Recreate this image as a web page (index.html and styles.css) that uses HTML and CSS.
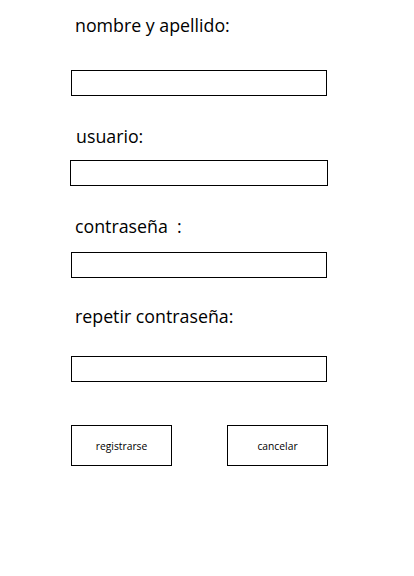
FILE: index.html
```html
<!DOCTYPE html>
<html><head><meta charset="utf-8"><link rel="stylesheet" href="styles.css"></head>
<body>
<form class="form">
  <label class="label l1">nombre y apellido:</label>
  <input class="box b1" type="text">
  <label class="label l2">usuario:</label>
  <input class="box b2 wide" type="text">
  <label class="label l3">contraseña&nbsp; :</label>
  <input class="box b3" type="password">
  <label class="label l4">repetir contraseña:</label>
  <input class="box b4" type="password">
  <div class="actions">
    <button type="button" class="btn">registrarse</button>
    <button type="button" class="btn">cancelar</button>
  </div>
</form>
</body></html>
```
FILE: styles.css
```css
html, body { margin: 0; background: #fff; }
.form {
  display: flex;
  flex-direction: column;
  align-items: flex-start;
  padding-left: 71px;
  width: 256px;
  font-family: "Open Sans", sans-serif;
  color: #000;
}
.label {
  display: block;
  font-size: 17.8px;
  line-height: 24px;
  margin-left: 4px;
  white-space: pre;
}
.l1 { margin-top: 13px; }
.l2 { margin-top: 28px; margin-left: 5px; }
.l3 { margin-top: 28px; }
.l4 { margin-top: 26px; }
.box {
  box-sizing: border-box;
  width: 256px;
  height: 26px;
  border: 1px solid #000;
  padding: 0;
  margin: 0;
  background: #fff;
  outline: none;
}
.b1 { margin-top: 33px; }
.b2 { margin-top: 12px; }
.b3 { margin-top: 14px; }
.b4 { margin-top: 28px; }
.wide { width: 258px; margin-left: -1px; }
.actions {
  display: flex;
  justify-content: space-between;
  width: 257px;
  margin-top: 43px;
}
.btn {
  box-sizing: border-box;
  width: 101px;
  height: 41px;
  border: 1px solid #000;
  background: #fff;
  padding: 0;
  margin: 0;
  font-family: "Open Sans", sans-serif;
  font-size: 10.3px;
  color: #000;
}
```
